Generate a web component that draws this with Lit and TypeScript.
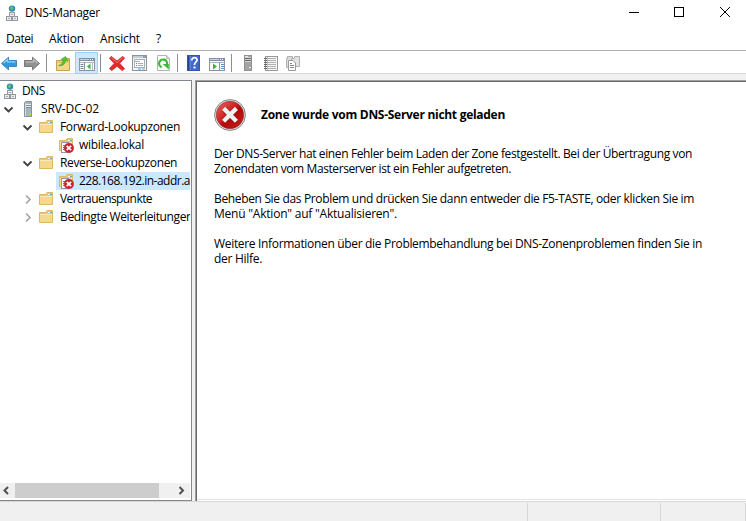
import { LitElement, html, svg, css } from "lit";
import { customElement } from "lit/decorators.js";

const arrow = (fill: string, edge: string, light: string, flip: boolean) => svg`
  <g transform=${flip ? "translate(24 0) scale(-1 1)" : ""}>
    <path d="M4.5 11.5 L11.5 5.2 V8.5 H19.5 V14.5 H11.5 V17.8 Z" fill=${fill} stroke=${edge} stroke-linejoin="round"/>
    <path d="M6.5 11 L10.5 7.6 V9.8 H18.5" fill="none" stroke=${light} stroke-width="1.2"/>
  </g>`;

const folderUp = svg`
  <path d="M4.5 18.5 V8.5 H10.5 L12 6.5 H17.5 V18.5 Z" fill="#e9c76b" stroke="#c3a352"/>
  <path d="M5 18 V11 H17 V18 Z" fill="#f3d88b"/>
  <path d="M6.5 13.5 C9.5 13 11 10.5 11.2 8 L8.8 7.6 L13.6 4.4 L16.2 9 L13.6 8.4 C13.2 12 10.5 14.4 6.5 13.5 Z" fill="#4fc42c" stroke="#4aa52f" stroke-width=".6"/>`;

const pane = (right: boolean) => svg`
  <rect x="4.5" y="6.5" width="15" height="12" fill="#fafcfd" stroke="#8795a6"/>
  <rect x="4" y="6" width="16" height="3" fill="#8090a2"/>
  <path d="M5 7.5 H14" stroke="#c5d3e0"/><path d="M15 7.5 H16 M17 7.5 H18" stroke="#fff"/>
  <path d="M5 10.5 H19" stroke="#aab6c3"/>
  ${right
    ? svg`<path d="M14.5 10 V18" stroke="#8795a6"/><path d="M8 11.5 L12 14.5 L8 17.5Z" fill="#38b536"/><path d="M16 12.5h3M16 14.5h3M16 16.5h3" stroke="#5d91d3"/>`
    : svg`<path d="M9.5 10 V18" stroke="#8795a6"/><path d="M5.5 12.5h3M5.5 14.5h3M5.5 16.5h3" stroke="#71869d"/><path d="M15.5 11.5 L12 14.5 L15.5 17.5Z" fill="#38b536"/><path d="M17.5 10 V18" stroke="#b4bec8"/>`}`;

const cross = svg`
  <path d="M6.2 4.3 L12 9 L17.8 4.3 L19.5 6.2 L14.7 11.3 L19.6 16.8 L17.2 18.6 L12 14.2 L6.8 18.6 L4.4 16.6 L9.3 11.3 L4.5 6.4 Z" fill="#de2b2b" stroke="#d34242" stroke-linejoin="round"/>
  <path d="M6.3 5.8 L12 10.6 L17.6 5.8" fill="none" stroke="#f0766c"/>`;

const properties = svg`
  <rect x="4.5" y="3.5" width="14" height="15" fill="#f4f5f6" stroke="#8e949b"/>
  <path d="M5 5 H18" stroke="#c5ccd4" stroke-width="2"/><path d="M15 5h3" stroke="#68727e"/>
  <rect x="6.5" y="7.5" width="10" height="8" fill="#fff" stroke="#a8afb7"/>
  <path d="M7 9.5 H12" stroke="#a8afb7"/>
  <path d="M8 11.5h1M8 13.5h1" stroke="#3888c8"/><path d="M10 11.5h5M10 13.5h5" stroke="#86b4d6"/>
  <path d="M10 17h3" stroke="#3bb3e0"/><path d="M14 17h3" stroke="#9ba2aa"/>`;

const refresh = svg`
  <path d="M6.5 3.5 H15.5 L18.5 6.5 V18.5 H6.5 Z" fill="#fbfbf8" stroke="#b3b3b3"/>
  <path d="M15.5 3.5 V6.5 H18.5" fill="#ddd" stroke="#b3b3b3"/>
  <path d="M10.6 15.2 A4 4 0 1 1 16 12.4" fill="none" stroke="#37b935" stroke-width="2.2"/>
  <path d="M11.6 12 H17.8 V17.6 Z" fill="#37b935"/>`;

const help = svg`
  <rect x="5.5" y="3.5" width="12" height="15" fill="#4067d0" stroke="#3a52a8"/>
  <path d="M6.5 4 V18" stroke="#263d92"/><path d="M8.5 4V18" stroke="#6d8be2" stroke-width=".7"/>
  <path d="M9.8 8.4 C9.7 4.8 15.3 4.8 15 8.2 C14.8 10.3 12.4 10.3 12.4 13" fill="none" stroke="#fff" stroke-width="1.8"/>
  <rect x="11.5" y="14.5" width="2" height="2" fill="#fff"/>`;

const grayServer = svg`
  <rect x="8.5" y="3.5" width="7" height="15" fill="#a4a4a4" stroke="#909090"/>
  <path d="M9 4.5H12" stroke="#e6e6e6"/><path d="M9 6.5h6M9 8.5h6" stroke="#666"/>
  <path d="M9 5.5h6M9 7.5h6M9 9.5h6" stroke="#d5d5d5"/><path d="M13 15.5h2" stroke="#eee"/>`;

const list = svg`
  <rect x="6.5" y="4.5" width="12" height="14" fill="#f7f7f7" stroke="#9a9a9a"/>
  <path d="M8.5 5V18" stroke="#bbb"/>
  <path d="M5 6.5h3M5 8.5h3M5 10.5h3M5 12.5h3M5 14.5h3M5 16.5h3" stroke="#666"/>
  <path d="M9 6.5h8M9 8.5h8M9 10.5h8M9 12.5h8M9 14.5h8M9 16.5h8" stroke="#b0b0b0"/>`;

const copies = svg`
  <path d="M4.5 15.5V6.5H5.5V4.5H10.5V6.5H12.5V15.5Z" fill="#dedede" stroke="#b0b0b0"/>
  <path d="M9.5 14.5V6.5H12.5V4.5H17.5V14.5Z" fill="#e2e2e2" stroke="#b0b0b0"/>
  <path d="M6.5 8.5H11L13.5 11V18.5H6.5Z" fill="#fcfcfc" stroke="#9a9a9a"/>
  <path d="M8 11.5h2M8 13.5h4M8 15.5h4" stroke="#888"/>`;

const dnsIcon = svg`
  <circle cx="8" cy="3.6" r="3.2" fill="#2f8cb5"/><path d="M6 2.5 L8 1 L9.5 3.4 L7 5.4Z" fill="#62c56b"/>
  <path d="M8 6.5V9" stroke="#999"/>
  <rect x="5.5" y="7.5" width="5" height="4" fill="#eef0f2" stroke="#95999e"/>
  <rect x="2.5" y="11.5" width="5" height="4" fill="#e8eaec" stroke="#95999e"/>
  <rect x="8.5" y="11.5" width="5" height="4" fill="#e8eaec" stroke="#95999e"/>
  <path d="M6.5 9.5h3M4 13.5h2M10 13.5h2" stroke="#a9afb6"/>`;

const serverIcon = svg`
  <path d="M4.5 15.5V1.5L6 .5H11.5V15.5Z" fill="#a6b4bd" stroke="#87939b"/>
  <path d="M5.5 2V15" stroke="#d2dce2"/>
  <path d="M6 3.5h5M6 5.5h5" stroke="#e9eff2"/><path d="M6 4.5h5M6 6.5h5" stroke="#7f8d96"/>
  <rect x="9" y="12" width="2" height="2" fill="#9af01e"/>`;

const folderShape = svg`
  <path d="M1.5 13.5V3.5H8L9 1.5H14.5V13.5Z" fill="#e9c673" stroke="#dcb967"/>
  <path d="M10 3.5h4" stroke="#fff"/><path d="M12 3.5h2" stroke="#6ea6c8"/>
  <path d="M2 5H14V13H2Z" fill="#f5d88c"/><path d="M2 5.5H14" stroke="#faeab9"/>`;

const zoneIcon = svg`
  ${folderShape}
  <rect x="3.5" y="5.5" width="7" height="10" fill="#fff" stroke="#9299a5"/>
  <path d="M5 8.5h2M5 10.5h2M5 12.5h2" stroke="#4c78b8"/>
  <circle cx="10.9" cy="11" r="4.9" fill="#c9222a" stroke="#b8555c" stroke-width=".5"/>
  <path d="M8.7 8.8 L13.1 13.2 M13.1 8.8 L8.7 13.2" stroke="#fff" stroke-width="1.8"/>`;

type Tool = { icon?: unknown; active?: boolean; gap?: number };
const tools: Tool[] = [
  { icon: arrow("#2e9be0", "#3b86bd", "#8fd4fa", false) },
  { icon: arrow("#929292", "#767676", "#bdbdbd", true) },
  { gap: 9 },
  { icon: folderUp },
  { icon: pane(false), active: true },
  { gap: 7 },
  { icon: cross },
  { icon: properties },
  { icon: refresh },
  { gap: 8 },
  { icon: help },
  { icon: pane(true) },
  { gap: 8 },
  { icon: grayServer },
  { icon: list },
  { icon: copies },
];

type TreeNode = { label: string; width: number; level: number; icon: unknown; open?: boolean; selected?: boolean };
const nodes: TreeNode[] = [
  { label: "DNS", width: 23, level: 0, icon: dnsIcon },
  { label: "SRV-DC-02", width: 58, level: 1, icon: serverIcon, open: true },
  { label: "Forward-Lookupzonen", width: 120, level: 2, icon: folderShape, open: true },
  { label: "wibilea.lokal", width: 65, level: 3, icon: zoneIcon },
  { label: "Reverse-Lookupzonen", width: 117, level: 2, icon: folderShape, open: true },
  { label: "228.168.192.in-addr.a", width: 111, level: 3, icon: zoneIcon, selected: true },
  { label: "Vertrauenspunkte", width: 92, level: 2, icon: folderShape, open: false },
  { label: "Bedingte Weiterleitungen", width: 133, level: 2, icon: folderShape, open: false },
];

const paragraphs: [string, number][][] = [
  [
    ["Der DNS-Server hat einen Fehler beim Laden der Zone festgestellt. Bei der Übertragung von", 478],
    ["Zonendaten vom Masterserver ist ein Fehler aufgetreten.", 297],
  ],
  [
    ["Beheben Sie das Problem und drücken Sie dann entweder die F5-TASTE, oder klicken Sie im", 480],
    ["Menü \"Aktion\" auf \"Aktualisieren\".", 183],
  ],
  [
    ["Weitere Informationen über die Problembehandlung bei DNS-Zonenproblemen finden Sie in", 488],
    ["der Hilfe.", 48],
  ],
];

@customElement("app-root")
class AppRoot extends LitElement {
  static styles = css`
    :host { display: flex; flex-direction: column; width: 746px; height: 521px; overflow: hidden; background: #fff;
      color: #000; font: 12px/18px "Open Sans", "Noto Sans", sans-serif; }
    * { box-sizing: border-box; }
    svg { display: block; flex: none; }
    .t { white-space: pre; flex: none; }
    .title { display: flex; height: 25px; align-items: center; padding-left: 4px; flex: none; }
    .title .t { margin-left: 5px; }
    .controls { display: flex; margin-left: auto; }
    .menu { display: flex; height: 26px; padding: 5px 0 0 6px; border-bottom: 1px solid #b0b0b0; flex: none; }
    .menu .t + .t { margin-left: 16px; }
    .toolbar { display: flex; height: 23px; padding-top: 1px; border-bottom: 1px solid #d9d9d9; flex: none; }
    .tool { width: 23px; height: 22px; flex: none; }
    .tool:first-child { margin-left: -3px; }
    .tool.active { background: #cce8ff; box-shadow: inset 0 0 0 1px #99d1ff; }
    .gap { height: 18px; margin-top: 2px; padding-right: 2px; flex: none; display: flex; justify-content: center; }
    .rule { width: 1px; background: #8d8d8d; }
    .main { display: flex; height: 427px; padding-top: 6px; background: #f0f0f0; flex: none; }
    .tree { display: flex; flex-direction: column; width: 192px; background: #fff; border: solid #828790; border-width: 1px 1px 1px 0;
      padding: 1px 1px 1px 0; }
    .nodes { flex: 1; overflow: hidden; }
    .row { display: flex; height: 18px; align-items: center; }
    .twist { width: 14px; margin-right: 4px; }
    .l0, .l1 { padding-left: 2px; }
    .l2 { padding-left: 21px; }
    .l3 { padding-left: 56px; }
    .l2 .twist { margin-right: 3px; }
    .cell { display: flex; align-items: center; height: 18px; flex: 1; min-width: 0; }
    .selected .cell { background: #cce8ff; }
    .l3 .cell { padding-left: 2px; }
    .cell .t { margin-left: 5px; }
    .l0 .cell .t { margin-left: 4px; }
    .l2 .cell .t { margin-left: 6px; }
    .bar { display: flex; height: 15px; margin-bottom: 1px; background: #f0f0f0; }
    .thumb { width: 144px; background: #cdcdcd; margin-right: 16px; }
    .view { flex: 1; margin-left: 3px; background: #fff; border: solid #a0a0a0; border-width: 1px 0 0 1px; display: flex; }
    .doc { flex: 1; border: solid #696969; border-width: 1px 0 0 1px; padding: 16px 0 0 17px; box-shadow: inset 0 -1px #fff, inset 0 -2px #e3e3e3; }
    .head { display: flex; align-items: center; gap: 14px; height: 34px; font-weight: 700; margin-bottom: 14px; }
    .para { margin-bottom: 15px; line-height: 15px; display: flex; flex-direction: column; align-items: flex-start; }
    .status { flex: 1; display: flex; background: #f0f0f0; border-top: 1px solid #d7d7d7; padding-top: 1px; }
    .s1, .s2, .s3 { border-right: 1px solid #d7d7d7; }
    .s1 { width: 528px; }
    .s2 { width: 133px; }
    .s3 { width: 85px; }
  `;

  async firstUpdated() {
    await document.fonts.ready;
    this.renderRoot.querySelectorAll<HTMLElement>(".t").forEach((el) => {
      const gap = (Number(el.dataset.width) - el.getBoundingClientRect().width) / el.textContent!.length;
      el.style.letterSpacing = `${gap}px`;
    });
  }

  private text(label: string, width: number) {
    return html`<span class="t" data-width=${width}>${label}</span>`;
  }

  private chevron(open?: boolean) {
    if (open === undefined) return "";
    return html`<svg class="twist" width="14" height="16" viewBox="0 0 14 16" fill="none">
      ${open
        ? svg`<path d="M2.5 6.5 L6.5 10.5 L10.5 6.5" stroke="#404040" stroke-width="1.8"/>`
        : svg`<path d="M5 4.5 L9 8.5 L5 12.5" stroke="#a6a6a6" stroke-width="1.7"/>`}
    </svg>`;
  }

  render() {
    return html`
      <div class="title">
        <svg width="16" height="16" viewBox="0 0 16 16">${dnsIcon}</svg>
        ${this.text("DNS-Manager", 75)}
        <svg class="controls" width="117" height="25" viewBox="629 0 117 25" fill="none" stroke="#000">
          <path d="M629 12.5H639"/><rect x="674.5" y="7.5" width="9" height="9"/><path d="M720 7 L730 17 M730 7 L720 17"/>
        </svg>
      </div>
      <div class="menu">
        ${this.text("Datei", 27)}${this.text("Aktion", 35)}${this.text("Ansicht", 40)}${this.text("?", 6)}
      </div>
      <div class="toolbar">
        ${tools.map((t) => t.gap
          ? html`<div class="gap" style="width:${t.gap}px"><div class="rule"></div></div>`
          : html`<div class="tool ${t.active ? "active" : ""}"><svg width="23" height="22" viewBox="0 0 23 22">${t.icon}</svg></div>`)}
      </div>
      <div class="main">
        <div class="tree">
          <div class="nodes">
            ${nodes.map((n) => html`<div class="row l${n.level} ${n.selected ? "selected" : ""}">
              ${this.chevron(n.open)}
              <div class="cell"><svg width="16" height="16" viewBox="0 0 16 16">${n.icon}</svg>${this.text(n.label, n.width)}</div>
            </div>`)}
          </div>
          <div class="bar">
            <svg width="15" height="15" viewBox="0 0 15 15" fill="none"><path d="M8 4 L4.5 7.5 L8 11" stroke="#505050" stroke-width="2"/></svg>
            <div class="thumb"></div>
            <svg width="15" height="15" viewBox="0 0 15 15" fill="none"><path d="M4.5 4 L8 7.5 L4.5 11" stroke="#505050" stroke-width="2"/></svg>
          </div>
        </div>
        <div class="view">
          <div class="doc">
            <div class="head">
              <svg width="33" height="34" viewBox="0 0 33 34">
                <defs><linearGradient id="red" x1="0" y1="0" x2="1" y2="1">
                  <stop offset="0" stop-color="#e46b64"/><stop offset=".45" stop-color="#cc1f1f"/><stop offset=".55" stop-color="#b30808"/><stop offset="1" stop-color="#c42020"/>
                </linearGradient></defs>
                <circle cx="16" cy="17" r="15.4" fill="#e4e4e4" stroke="#858585"/>
                <circle cx="16" cy="17" r="13.7" fill="url(#red)" stroke="#973333" stroke-width=".7"/>
                <path d="M10 11 L22 23 M22 11 L10 23" stroke="#8c1010" stroke-width="5.4"/>
                <path d="M9.6 10.4 L22.4 23.2 M22.4 10.4 L9.6 23.2" stroke="#f0f0f0" stroke-width="4.4"/>
              </svg>
              ${this.text("Zone wurde vom DNS-Server nicht geladen", 244)}
            </div>
            ${paragraphs.map((p) => html`<div class="para">${p.map(([s, w]) => this.text(s, w))}</div>`)}
          </div>
        </div>
      </div>
      <div class="status"><div class="s1"></div><div class="s2"></div><div class="s3"></div></div>
    `;
  }
}
